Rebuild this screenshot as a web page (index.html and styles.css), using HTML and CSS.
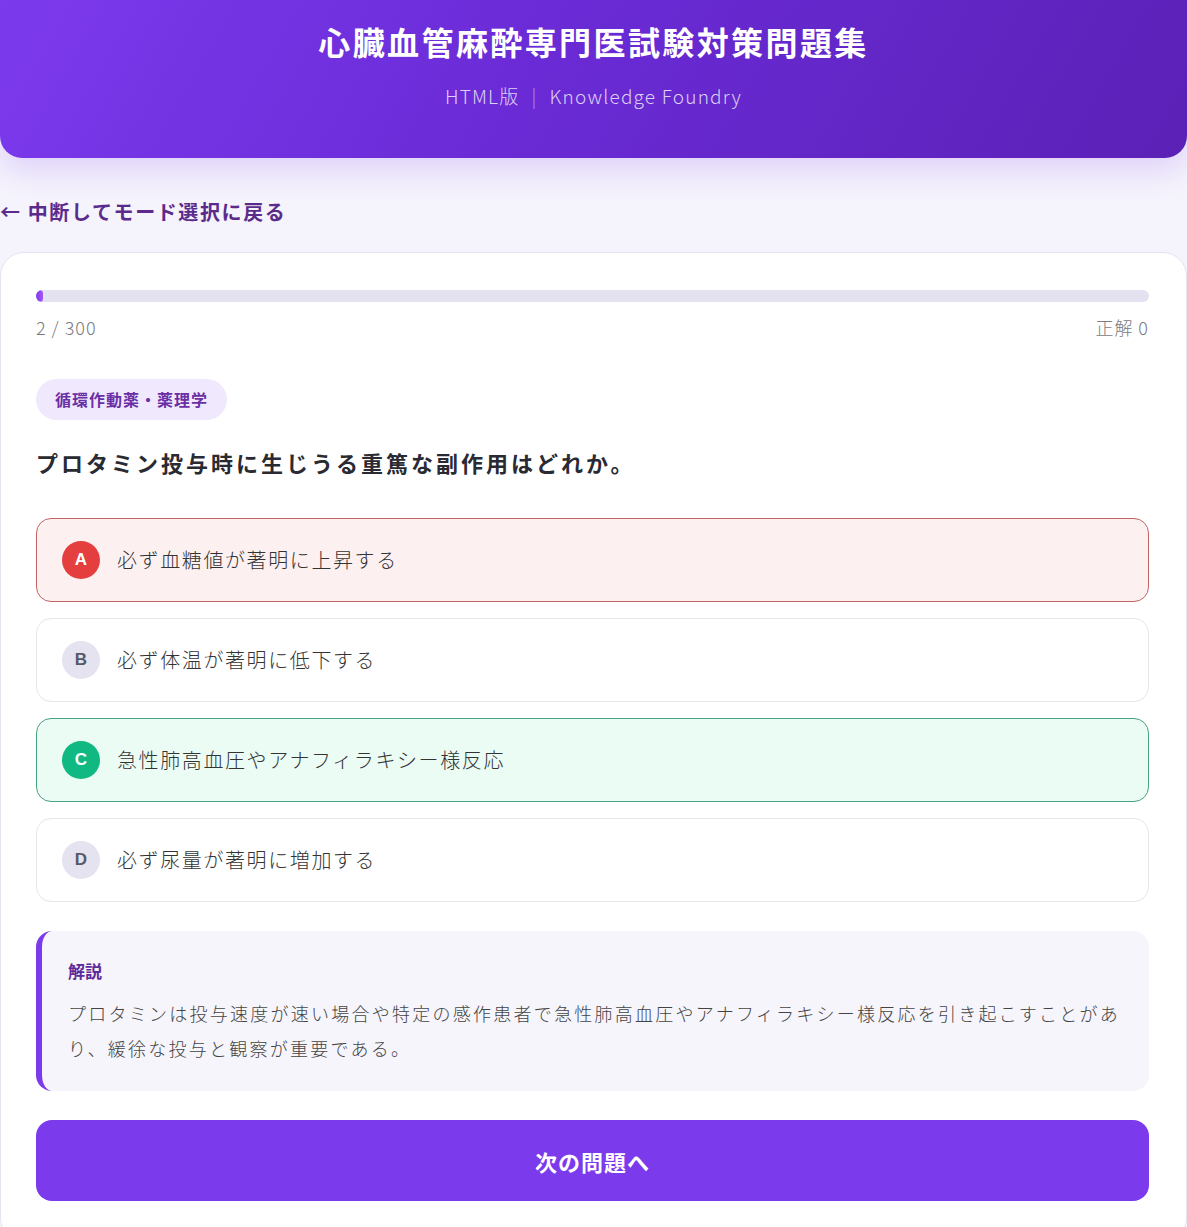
FILE: index.html
```html
<!DOCTYPE html>
<html lang="ja">
<head>
<meta charset="utf-8">
<title>心臓血管麻酔専門医試験対策問題集</title>
<link rel="stylesheet" href="styles.css">
</head>
<body>
<header class="hero">
  <h1 class="hero-title">心臓血管麻酔専門医試験対策問題集</h1>
  <p class="hero-sub">HTML版<span class="sep">|</span>Knowledge Foundry</p>
</header>

<a class="back-link" href="#">← 中断してモード選択に戻る</a>

<main class="card">
  <div class="progress"><div class="progress-fill" style="width:0.67%"></div></div>
  <div class="progress-meta">
    <span>2 / 300</span>
    <span>正解 0</span>
  </div>

  <span class="tag">循環作動薬・薬理学</span>

  <h2 class="question">プロタミン投与時に生じうる重篤な副作用はどれか。</h2>

  <ul class="options">
    <li class="option wrong"><span class="badge">A</span><span class="opt-text">必ず血糖値が著明に上昇する</span></li>
    <li class="option"><span class="badge">B</span><span class="opt-text">必ず体温が著明に低下する</span></li>
    <li class="option correct"><span class="badge">C</span><span class="opt-text">急性肺高血圧やアナフィラキシー様反応</span></li>
    <li class="option"><span class="badge">D</span><span class="opt-text">必ず尿量が著明に増加する</span></li>
  </ul>

  <section class="explain">
    <h3 class="explain-title">解説</h3>
    <p class="explain-text">プロタミンは投与速度が速い場合や特定の感作患者で急性肺高血圧やアナフィラキシー様反応を引き起こすことがあり、緩徐な投与と観察が重要である。</p>
  </section>

  <button class="next-btn" type="button">次の問題へ</button>
</main>
</body>
</html>
```

FILE: styles.css
```css
* { box-sizing: border-box; }

html, body {
  margin: 0;
  padding: 0;
}

body {
  background: #f5f3fc;
  font-family: "Noto Sans CJK JP", "Noto Sans", sans-serif;
  color: #333;
}

.hero {
  height: 158px;
  background: linear-gradient(120deg, #7c3aed 0%, #6a2bd6 45%, #5b21b6 100%);
  border-radius: 0 0 22px 22px;
  box-shadow: 0 12px 30px rgba(124, 58, 237, 0.18);
  text-align: center;
  color: #fff;
  padding-top: 18px;
}

.hero-title {
  margin: 0;
  font-size: 32px;
  line-height: 46px;
  font-weight: 700;
  letter-spacing: 2.4px;
}

.hero-sub {
  margin: 19px 0 0;
  font-size: 19px;
  line-height: 26px;
  font-weight: 300;
  letter-spacing: 1.2px;
  color: rgba(255, 255, 255, 0.78);
}

.hero-sub .sep {
  display: inline-block;
  margin: 0 12px;
  opacity: 0.6;
}

.back-link {
  display: inline-block;
  margin-top: 40px;
  font-size: 20px;
  line-height: 28px;
  font-weight: 700;
  letter-spacing: 1.6px;
  color: #5b2b8c;
  text-decoration: none;
}

.card {
  display: block;
  margin-top: 26px;
  background: #fff;
  border: 1px solid #e6e3ef;
  border-radius: 24px;
  padding: 37px 37px 40px 35px;
}

.progress {
  height: 12px;
  background: #e4e1f0;
  border-radius: 6px;
  overflow: hidden;
}

.progress-fill {
  height: 100%;
  background: linear-gradient(90deg, #7c3aed, #a855f7);
  border-radius: 6px;
}

.progress-meta {
  display: flex;
  justify-content: space-between;
  margin-top: 12px;
  font-size: 18px;
  line-height: 26px;
  color: #7a7a80;
  font-weight: 300;
  letter-spacing: 1px;
}

.tag {
  display: inline-block;
  margin-top: 39px;
  padding: 0 19px;
  height: 41px;
  line-height: 41px;
  border-radius: 21px;
  background: #f0e9fd;
  color: #6b2fa5;
  font-size: 16px;
  font-weight: 700;
  letter-spacing: 1px;
}

.question {
  margin: 26px 0 0;
  font-size: 22px;
  line-height: 32px;
  font-weight: 700;
  letter-spacing: 3px;
  color: #2a2a33;
}

.options {
  list-style: none;
  margin: 40px 0 0;
  padding: 0;
  display: flex;
  flex-direction: column;
  gap: 16px;
}

.option {
  display: flex;
  align-items: center;
  gap: 17px;
  height: 84px;
  padding: 0 25px;
  border: 1.5px solid #e6e6ea;
  border-radius: 15px;
  background: #fff;
}

.badge {
  flex: none;
  width: 38px;
  height: 38px;
  border-radius: 50%;
  background: #e5e3f0;
  color: #555a66;
  display: flex;
  align-items: center;
  justify-content: center;
  font-family: "Liberation Sans", Arial, sans-serif;
  font-weight: 700;
  font-size: 17px;
}

.opt-text {
  font-size: 20px;
  line-height: 28px;
  font-weight: 300;
  letter-spacing: 1.6px;
  color: #333;
}

.option.wrong {
  background: #fdf0f0;
  border-color: #c26464;
}

.option.wrong .badge {
  background: #e53e3e;
  color: #fff;
}

.option.correct {
  background: #eafcf3;
  border-color: #47a184;
}

.option.correct .badge {
  background: #10b981;
  color: #fff;
}

.explain {
  margin-top: 29px;
  background: #f6f5fb;
  border-left: 6px solid #7c3aed;
  border-radius: 16px;
  padding: 28px 26px 25px;
}

.explain-title {
  margin: 0;
  font-size: 17px;
  line-height: 24px;
  font-weight: 700;
  color: #5e2a9a;
}

.explain-text {
  margin: 13px 0 0;
  font-size: 18px;
  line-height: 35px;
  font-weight: 300;
  letter-spacing: 2.25px;
  color: #444;
}

.next-btn {
  display: block;
  width: 100%;
  margin-top: 29px;
  height: 81px;
  border: none;
  border-radius: 16px;
  background: #7c3aed;
  color: #fff;
  font-family: "Noto Sans CJK JP", "Noto Sans", sans-serif;
  font-size: 22px;
  font-weight: 700;
  letter-spacing: 1px;
  cursor: pointer;
}
```
